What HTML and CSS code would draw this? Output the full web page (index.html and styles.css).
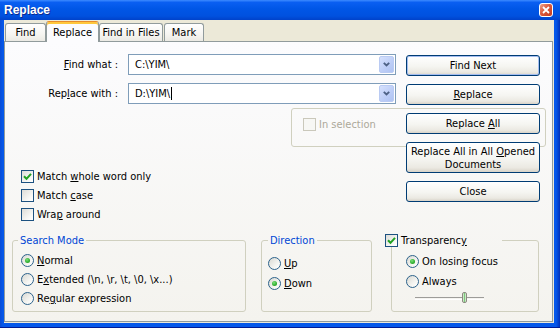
FILE: index.html
```html
<!DOCTYPE html>
<html>
    <head>
        <link rel="stylesheet" href="styles.css">
    </head>
    <body>
        <div class="window">
            <div class="titlebar">
                <span class="title">Replace</span>
                <span class="close">
                    <svg width="8" height="8" viewBox="0 0 8 8"><path d="M1 1L7 7M7 1L1 7" stroke="#fff" stroke-width="1.8"/></svg>
                </span>
            </div>
            <div class="frame">
                <div class="client">
                    <div class="tabs">
                        <div class="tab tab-find">Find</div>
                        <div class="tab tab-replace active">Replace</div>
                        <div class="tab tab-files">Find in Files</div>
                        <div class="tab tab-mark">Mark</div>
                    </div>
                    <div class="panel">
                        <div class="top">
                            <div class="left">
                                <div class="field">
                                    <label><u>F</u>ind what :</label>
                                    <div class="combo">
                                        <span class="value">C:\YIM\</span>
                                        <span class="arrow"><svg width="7" height="5" viewBox="0 0 7 5"><path d="M0.8 0.8L3.5 3.5L6.2 0.8" fill="none" stroke="#4d6185" stroke-width="1.8"/></svg></span>
                                    </div>
                                </div>
                                <div class="field">
                                    <label>Rep<u>l</u>ace with :</label>
                                    <div class="combo">
                                        <span class="value">D:\YIM\<span class="caret"></span></span>
                                        <span class="arrow"><svg width="7" height="5" viewBox="0 0 7 5"><path d="M0.8 0.8L3.5 3.5L6.2 0.8" fill="none" stroke="#4d6185" stroke-width="1.8"/></svg></span>
                                    </div>
                                </div>
                                <div class="checks">
                                    <div class="opt"><span class="cb checked"><svg width="9" height="9" viewBox="0 0 9 9"><path d="M1 4.2L3.5 6.8L8 1.8" fill="none" stroke="#21a121" stroke-width="2"/></svg></span><span>Match <u>w</u>hole word only</span></div>
                                    <div class="opt"><span class="cb"></span><span>Match <u>c</u>ase</span></div>
                                    <div class="opt"><span class="cb"></span><span>Wra<u>p</u> around</span></div>
                                </div>
                            </div>
                            <div class="buttons">
                                <div class="btn default"><span>Find Next</span></div>
                                <div class="btn"><span><u>R</u>eplace</span></div>
                                <div class="btn"><span>Replace <u>A</u>ll</span></div>
                                <div class="btn tall"><span>Replace All in All <u>O</u>pened<br>Documents</span></div>
                                <div class="btn"><span>Close</span></div>
                            </div>
                        </div>
                        <div class="insel">
                            <div class="opt disabled"><span class="cb"></span><span>In selection</span></div>
                        </div>
                        <div class="groups">
                            <fieldset class="group search">
                                <legend>Search Mode</legend>
                                <div class="opts">
                                    <div class="opt"><span class="rb on"></span><span><u>N</u>ormal</span></div>
                                    <div class="opt"><span class="rb"></span><span>E<u>x</u>tended (\n, \r, \t, \0, \x...)</span></div>
                                    <div class="opt"><span class="rb"></span><span>Re<u>g</u>ular expression</span></div>
                                </div>
                            </fieldset>
                            <fieldset class="group direction">
                                <legend>Direction</legend>
                                <div class="opts">
                                    <div class="opt"><span class="rb"></span><span><u>U</u>p</span></div>
                                    <div class="opt"><span class="rb on"></span><span><u>D</u>own</span></div>
                                </div>
                            </fieldset>
                            <fieldset class="group transp">
                                <legend><span class="opt"><span class="cb checked"><svg width="9" height="9" viewBox="0 0 9 9"><path d="M1 4.2L3.5 6.8L8 1.8" fill="none" stroke="#21a121" stroke-width="2"/></svg></span><span>Transparenc<u>y</u></span></span></legend>
                                <div class="opts">
                                    <div class="opt"><span class="rb on"></span><span>On losing focus</span></div>
                                    <div class="opt"><span class="rb"></span><span>Always</span></div>
                                    <div class="slider">
                                        <div class="track"></div>
                                        <div class="thumb"></div>
                                    </div>
                                </div>
                            </fieldset>
                        </div>
                    </div>
                </div>
            </div>
        </div>
    </body>
</html>
```

FILE: styles.css
```css
body{
    margin: 0;
    font-family: Tahoma, "DejaVu Sans Condensed", "Liberation Sans", sans-serif;
    font-size: 11px;
    color: #000;
}
.window{
    width: 560px;
    height: 328px;
    display: flex;
    flex-direction: column;
    background: #0553e3;
}
.titlebar{
    height: 20px;
    flex: none;
    display: flex;
    align-items: center;
    justify-content: space-between;
    padding: 0 7px 0 4px;
    background: linear-gradient(#3d8bff 0%, #0a5ff2 12%, #0056e6 45%, #0051df 80%, #0042ca 100%);
}
.title{
    color: #fff;
    font-family: "Liberation Sans", Arial, sans-serif;
    font-weight: bold;
    font-size: 12px;
    text-shadow: 1px 1px #0b2a8e;
}
.close{
    width: 14px;
    height: 14px;
    box-sizing: border-box;
    border: 1px solid #fff;
    border-radius: 3px;
    background: linear-gradient(135deg, #eea48c, #dc5a3c 45%, #c43a1d);
    display: flex;
    align-items: center;
    justify-content: center;
}
.frame{
    flex: 1;
    padding: 0 6px 5px 4px;
    background: linear-gradient(to right, #0a4cd6, #0558ea 3px, #0558ea calc(100% - 4px), #0030b8);
    box-shadow: inset 0 -1px #001c94;
}
.client{
    height: 303px;
    background: #ece9d8;
    display: flex;
    flex-direction: column;
}

/* tabs */
.tabs{
    height: 21px;
    display: flex;
    align-items: flex-end;
    padding-left: 1px;
}
.tab{
    height: 18px;
    box-sizing: border-box;
    border: 1px solid #919b9c;
    border-bottom: none;
    border-radius: 3px 3px 0 0;
    background: linear-gradient(#ffffff, #f6f5f1 60%, #ebeae4);
    display: flex;
    align-items: center;
    justify-content: center;
    padding-bottom: 1px;
    white-space: nowrap;
}
.tab.active{
    height: 21px;
    margin-bottom: -1px;
    position: relative;
    z-index: 2;
    background: #fcfcfe;
    border-top: 1px solid #e68b2c;
    box-shadow: inset 0 2px #ffc83c;
    padding-top: 1px;
}
.tab-find{ width: 41px; }
.tab-replace{ width: 53px; }
.tab-files{ width: 64px; }
.tab-mark{ width: 40px; margin-left: 1px; }

.panel{
    height: 281px;
    box-sizing: border-box;
    margin-right: 1px;
    border: 1px solid #919b9c;
    background: linear-gradient(#fcfcfe, #f4f3ee);
    position: relative;
}
.top{
    display: flex;
    gap: 10px;
    padding: 12px 12px 0 0;
}
.left{
    width: 391px;
}
.field{
    display: grid;
    grid-template-columns: 123px 1fr;
    align-items: center;
    height: 21px;
    margin-bottom: 8px;
}
.field label{
    text-align: right;
    padding-right: 10px;
}
.combo{
    height: 21px;
    box-sizing: border-box;
    border: 1px solid #7f9db9;
    background: #fff;
    display: flex;
    align-items: center;
    padding: 0 1px 0 6px;
}
.value{
    flex: 1;
    display: flex;
    align-items: center;
}
.caret{
    width: 1px;
    height: 13px;
    background: #000;
    margin-left: 1px;
}
.arrow{
    width: 15px;
    height: 17px;
    box-sizing: border-box;
    border: 1px solid #bacbf3;
    border-radius: 2px;
    background: linear-gradient(135deg, #d6e1fd, #bccdf7 60%, #afc3f2);
    display: flex;
    align-items: center;
    justify-content: center;
}
.checks{
    margin-top: 63px;
    padding-left: 16px;
}
.opt{
    height: 19px;
    display: flex;
    align-items: center;
    gap: 3px;
    white-space: nowrap;
}
.cb{
    width: 13px;
    height: 13px;
    flex: none;
    box-sizing: border-box;
    border: 1px solid #1c5180;
    background: linear-gradient(135deg, #dcdcd7, #f8f8f6 70%, #ffffff);
    display: flex;
    align-items: center;
    justify-content: center;
}
.rb{
    width: 13px;
    height: 13px;
    flex: none;
    box-sizing: border-box;
    border: 1px solid #2c628b;
    border-radius: 50%;
    background: linear-gradient(135deg, #d8d8d2, #f6f6f3 65%, #ffffff);
    display: flex;
    align-items: center;
    justify-content: center;
}
.rb.on::after{
    content: "";
    width: 5px;
    height: 5px;
    border-radius: 50%;
    background: radial-gradient(circle at 40% 35%, #7be07a, #2fae2f 60%, #1f8f1f);
}

/* buttons */
.buttons{
    width: 134px;
    margin-top: 1px;
    display: flex;
    flex-direction: column;
    gap: 8px;
}
.btn{
    height: 21px;
    box-sizing: border-box;
    border: 1px solid #003c74;
    border-radius: 3px;
    background: linear-gradient(#ffffff, #f5f5f1 55%, #ebe9e2 85%, #d8d3c8);
    display: flex;
    align-items: center;
    justify-content: center;
    text-align: center;
    padding: 0 1px;
    line-height: 13px;
    white-space: nowrap;
    position: relative;
    z-index: 1;
}
.btn.default{
    box-shadow: inset 0 0 0 1px #a4bdf0;
}
.btn.tall{
    height: 31px;
}

/* disabled "in selection" box behind the buttons */
.insel{
    position: absolute;
    left: 286px;
    top: 66px;
    width: 255px;
    height: 39px;
    box-sizing: border-box;
    border: 1px solid #d0d0bf;
    border-radius: 3px;
    padding: 6px 0 0 11px;
}
.opt.disabled{
    color: #aca899;
}
.opt.disabled .cb{
    border-color: #cac8bb;
    background: #f7f7f4;
}

/* group boxes */
.groups{
    display: flex;
    margin-top: 10px;
    padding-left: 7px;
}
.group{
    margin: 0;
    padding: 0;
    height: 78px;
    box-sizing: border-box;
    border: 1px solid #d0d0bf;
    border-radius: 3px;
    min-width: 0;
}
.group legend{
    padding: 0 2px;
    margin-left: 5px;
    color: #0046d5;
    line-height: 13px;
}
.search{
    width: 234px;
}
.search .opts{
    padding: 4px 0 0 8px;
}
.direction{
    width: 111px;
    margin-left: 15px;
}
.direction legend{
    margin-left: 6px;
}
.direction .opts{
    padding: 6px 0 0 6px;
}
.direction .opt{
    height: 20px;
}
.transp{
    width: 148px;
    margin-left: 19px;
}
.transp legend{
    margin-left: -7px;
    padding: 0 35px 0 0;
    color: #000;
}
.transp legend .opt{
    height: 13px;
}
.transp .opts{
    padding: 4px 0 0 14px;
}
.transp .opt{
    height: 20px;
}
.slider{
    width: 69px;
    height: 12px;
    margin-left: 9px;
    margin-top: 1px;
    position: relative;
    display: flex;
    align-items: center;
}
.track{
    width: 100%;
    height: 1px;
    border-top: 1px solid #9d9c99;
    border-bottom: 1px solid #fff;
}
.thumb{
    position: absolute;
    left: 47px;
    top: 0;
    width: 5px;
    height: 11px;
    box-sizing: border-box;
    border: 1px solid #8c8a80;
    border-radius: 2px;
    background: linear-gradient(to right, #f4f4f0, #7cc87a 50%, #f4f4f0);
}
```
